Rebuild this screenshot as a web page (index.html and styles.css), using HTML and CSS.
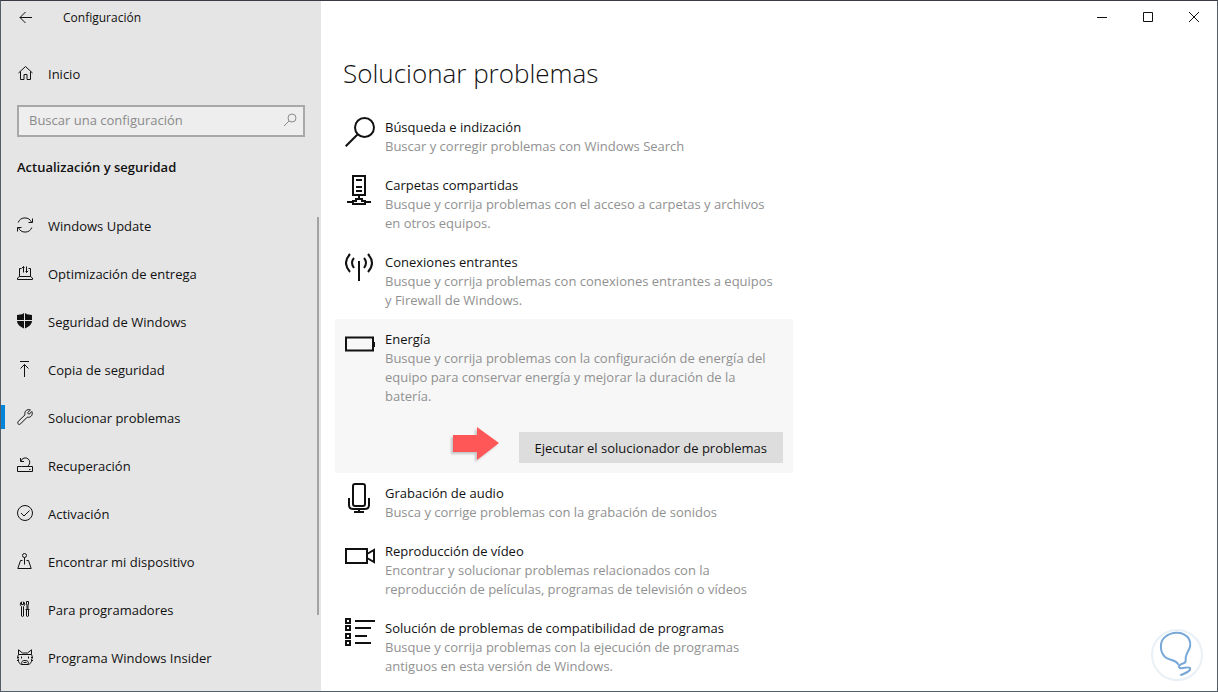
FILE: index.html
```html
<!DOCTYPE html>
<html lang="es">
<head>
<meta charset="utf-8">
<meta name="viewport" content="width=device-width, initial-scale=1">
<title>Configuración</title>
<link rel="stylesheet" href="styles.css">
</head>
<body>
<div class="window">
  <aside class="sidebar">
    <header class="titlebar">
      <button class="back" aria-label="Atrás"><svg width="14" height="14" viewBox="0 0 14 14"><path d="M6.500 1 1 6.500l5.500 5.500M1 6.500h12"/></svg></button>
      <span class="app-name">Configuración</span>
    </header>
    <a class="nav-link home" href="#"><svg class="nav-icon" viewBox="0 0 16 16"><path d="M1.500 8 8.500 1.500 15.500 8M3.500 6.500v8h3.500v-5h3v5h3.500v-8"/></svg>Inicio</a>
    <form class="search">
      <input class="search-input" type="text" placeholder="Buscar una configuración" aria-label="Buscar una configuración">
      <svg class="search-icon" viewBox="0 0 14 14"><circle cx="9" cy="5" r="4"/><path d="M6 8 1 13"/></svg>
    </form>
    <h2 class="section">Actualización y seguridad</h2>
    <nav class="nav">
      <a class="nav-link" href="#"><svg class="nav-icon" viewBox="0 0 16 16"><path d="M1.200 5.500A7.200 7.200 0 0 1 14.600 5.500M15.500 1.500v4H11.500M14.800 10.500A7.200 7.200 0 0 1 1.400 10.500M.5 14.500v-4H4.500"/></svg>Windows Update</a>
      <a class="nav-link" href="#"><svg class="nav-icon" viewBox="0 0 16 16"><path d="M4.500 3.500h-2v8M11.500 3.500h2v8M2.500 11.500h11l2 1.500v1.500H.5V13zM6.500 7.500v-6M4.800 3.200 6.500 1.500l1 1M9.500 1.500v6M8.500 6.500l1 1 1.700-1.700"/></svg>Optimización de entrega</a>
      <a class="nav-link" href="#"><svg class="nav-icon" viewBox="0 0 16 16"><path class="solid" d="M7 0 5 1.200 0 2v5h7zM8 0v7h7V2L10 1.200zM0 8h7v7.500C3 13.500.5 12 0 8zM8 8h7c-.5 4-3 5.500-7 7.500z"/></svg>Seguridad de Windows</a>
      <a class="nav-link" href="#"><svg class="nav-icon" viewBox="0 0 16 16"><path d="M3 .5h9M7.500 16V3.500M3.500 7.500l4-4 4 4"/></svg>Copia de seguridad</a>
      <a class="nav-link current" href="#" aria-current="page"><svg class="nav-icon" viewBox="0 0 16 16"><path d="M14.800 2.500 12 5.300 10.500 3.800 13.400 1C10.500-.3 7 2 8 5.800L1.200 12.500C-.3 14.500 2 16.500 3.600 14.800L10.200 8.200C14 9 16.300 5.500 14.800 2.500z"/></svg>Solucionar problemas</a>
      <a class="nav-link" href="#"><svg class="nav-icon" viewBox="0 0 16 16"><path d="M4.500 9.500h-4v5h15v-5H11M12 12.500h1.500M4.500 9.500H11M10.500 9.300A4.500 4.500 0 1 0 4 4M3.500 1v3.500H7"/></svg>Recuperación</a>
      <a class="nav-link" href="#"><svg class="nav-icon" viewBox="0 0 16 16"><circle cx="8" cy="8" r="7.500"/><path d="M4 8l3 3 5.500-5.500"/></svg>Activación</a>
      <a class="nav-link" href="#"><svg class="nav-icon" viewBox="0 0 16 16"><circle cx="7.500" cy="2.500" r="2"/><path d="M7.500 4.500v7M5.500 7.500h-2L.8 15.500h13.400l-2.700-8h-2"/></svg>Encontrar mi dispositivo</a>
      <a class="nav-link" href="#"><svg class="nav-icon" viewBox="0 0 16 16"><path d="M4.500.8v2.700h2V.8C8.300 2 8 4.500 6.500 5.500V15c-.5.700-1.500.7-2 0V5.500C3 4.500 2.800 2 4.500.8zM9.500.5h2V3l-.5 1v4.500h-1V4l-.5-1zM8.500 8.500h4M9.500 8.500V15c.5.700 1.500.7 2 0V8.500"/></svg>Para programadores</a>
      <a class="nav-link" href="#"><svg class="nav-icon" viewBox="0 0 16 16"><path d="M1.500 5.500V.8L5.500 4h5l4-3.200v4.700zC.5 7.500.5 9 1.500 11c-.3 2 1 4.200 3.500 4.500h6c2.500-.3 3.800-2.500 3.500-4.500 1-2 1-3.500 0-5.500M0 8.500h2M14 8.500h2M0 11.500h2M14 11.500h2M4.500 7.500v2M11.500 7.500v2M5 15c-1-2 0-3.500 3-3.500s4 1.500 3 3.500M6.500 13.500h3"/></svg>Programa Windows Insider</a>
    </nav>
    <span class="scroll-thumb"></span>
  </aside>

  <main class="content">
    <div class="controls">
      <button class="control" aria-label="Minimizar"><svg width="11" height="11" viewBox="0 0 11 11"><path d="M0 5.500h10"/></svg></button>
      <button class="control" aria-label="Maximizar"><svg width="11" height="11" viewBox="0 0 11 11"><path d="M.5.5h9v9H.5z"/></svg></button>
      <button class="control" aria-label="Cerrar"><svg width="11" height="11" viewBox="0 0 11 11"><path d="m0 0 10 10M10 0 0 10"/></svg></button>
    </div>
    <h1 class="title">Solucionar problemas</h1>
    <div class="list">
      <section class="item">
        <svg class="item-icon" viewBox="0 0 30 30"><circle cx="19.500" cy="10.500" r="9.500"/><path d="M12.500 17.500.7 29.300"/></svg>
        <div class="item-text"><h3 class="name">Búsqueda e indización</h3><p class="desc">Buscar y corregir problemas con Windows Search</p></div>
      </section>
      <section class="item">
        <svg class="item-icon" viewBox="0 0 30 30"><path d="M8 1h12v19H8zM11 5h6M11 12h6M11 16h6M14 20v4M2 27h6M20 27h6M11 24h6v2h3v3H8v-3h3z"/></svg>
        <div class="item-text"><h3 class="name">Carpetas compartidas</h3><p class="desc">Busque y corrija problemas con el acceso a carpetas y archivos en otros equipos.</p></div>
      </section>
      <section class="item">
        <svg class="item-icon" viewBox="0 0 30 30"><path d="M14 9v20M9 6Q5 10.500 9 16M19 6Q23 10.500 19 16M5 2Q-3 11 5 20M23 2Q31 11 23 20"/></svg>
        <div class="item-text"><h3 class="name">Conexiones entrantes</h3><p class="desc">Busque y corrija problemas con conexiones entrantes a equipos y Firewall de Windows.</p></div>
      </section>
      <section class="item open">
        <svg class="item-icon" viewBox="0 0 30 30"><path d="M1 8.500h27v13H1zM29 13v5"/></svg>
        <div class="item-text"><h3 class="name">Energía</h3><p class="desc">Busque y corrija problemas con la configuración de energía del equipo para conservar energía y mejorar la duración de la batería.</p></div>
        <div class="actions">
          <svg class="arrow" viewBox="0 0 50 36"><path class="arrow-body" d="M4 10h24V2l22 16-22 17v-8H4z"/></svg>
          <button class="run">Ejecutar el solucionador de problemas</button>
        </div>
      </section>
      <section class="item">
        <svg class="item-icon" viewBox="0 0 30 30"><rect x="8" y="1" width="12" height="22" rx="2"/><path d="M4 15v7q0 4 4 4h12q4 0 4-4v-7M14 26v4M9 29h10"/></svg>
        <div class="item-text"><h3 class="name">Grabación de audio</h3><p class="desc">Busca y corrige problemas con la grabación de sonidos</p></div>
      </section>
      <section class="item">
        <svg class="item-icon" viewBox="0 0 30 30"><path d="M1 8h21v14H1zM22 13l7-4v12l-7-4"/></svg>
        <div class="item-text"><h3 class="name">Reproducción de vídeo</h3><p class="desc">Encontrar y solucionar problemas relacionados con la reproducción de películas, programas de televisión o vídeos</p></div>
      </section>
      <section class="item">
        <svg class="item-icon" viewBox="0 0 30 30"><path d="M1 1h4v4H1zM1 8h4v4H1zM1 16h4v4H1zM1 23h4v4H1zM10 3h20M10 10h16M10 18h12M10 25h16"/></svg>
        <div class="item-text"><h3 class="name">Solución de problemas de compatibilidad de programas</h3><p class="desc">Busque y corrija problemas con la ejecución de programas antiguos en esta versión de Windows.</p></div>
      </section>
    </div>
    <svg class="badge" viewBox="0 0 54 54"><circle class="badge-disc" cx="27" cy="27" r="25"/><path class="badge-bulb" d="M28 36C25 31 20 33 15 29 10 24 9 14 15 9c7-6 19-6 24 2 4 8-2 12-3 17-1 4 1 6-2 7-4 1-7 4-4 5 3 1 8-2 10 0 1 3-4 5-9 7"/></svg>
  </main>
</div>
</body>
</html>
```
FILE: styles.css
```css
* { box-sizing: border-box; }

body {
  margin: 0;
  font: 13px/20px "Open Sans", "Noto Sans", sans-serif;
  color: #111;
  background: #fff;
}

h1, h2, h3, p { margin: 0; }
button, input { font: inherit; color: inherit; border: 0; border-radius: 0; }
svg { fill: none; stroke: currentColor; flex: none; }

.window {
  display: flex;
  min-height: 100vh;
  border: 1px solid #555e68;
  border-top-color: #3a3a44;
}

.sidebar {
  position: relative;
  flex: none;
  width: 320px;
  background: #e5e5e5;
}

.titlebar {
  display: flex;
  align-items: center;
  gap: 20px;
  height: 34px;
  padding-left: 8px;
}

.back {
  display: grid;
  place-items: center;
  width: 34px;
  height: 32px;
  padding: 0;
  background: none;
}

.app-name { font-size: 12px; }

.nav-link {
  display: flex;
  align-items: center;
  gap: 15px;
  height: 48px;
  padding-left: 16px;
  color: inherit;
  text-decoration: none;
}

.home { margin-top: 15px; }

.nav-icon { width: 16px; height: 16px; margin-bottom: 2px; }
.solid { fill: currentColor; stroke: none; }

.current {
  background: linear-gradient(#0085d8, #0085d8) 0 11px / 4px 24px no-repeat;
}

.search {
  display: flex;
  align-items: center;
  margin: 7px 16px 0;
  height: 32px;
  padding: 0 6px 2px 10px;
  border: 2px solid #a8a8a8;
  background: #eee;
}

.search-input {
  flex: 1;
  min-width: 0;
  padding: 0;
  outline: 0;
  background: none;
}

.search-input::placeholder { color: #8a8a8a; opacity: 1; }
.search-icon { width: 14px; height: 14px; color: #8a8a8a; }

.section {
  margin: 20px 16px 25px;
  font-size: 13px;
  font-weight: 600;
}

.scroll-thumb {
  position: absolute;
  top: 216px;
  right: 2px;
  width: 2px;
  height: 398px;
  background: #a3a3a3;
}

.content { flex: 1; min-width: 0; padding-left: 14px; }

.controls { display: flex; justify-content: flex-end; height: 32px; }

.control {
  display: grid;
  place-items: center;
  width: 46px;
  padding: 0;
  background: none;
}

.title {
  margin: 22px 0 16px 8px;
  font-size: 26px;
  line-height: 36px;
  font-weight: 300;
}

.list { max-width: 458px; }

.item {
  display: grid;
  grid-template-columns: 30px 1fr;
  column-gap: 10px;
  padding: 10px 10px 9px;
}

.item-icon { width: 30px; height: 30px; stroke-width: 2; }
.item-text { padding-right: 6px; }
.name { font-size: 13px; font-weight: 400; }
.desc { line-height: 19px; color: #919191; }

.open { padding-bottom: 10px; background: #f7f7f7; }

.actions {
  grid-column: 1 / -1;
  display: flex;
  justify-content: flex-end;
  align-items: flex-end;
  gap: 20px;
  height: 31px;
  margin-top: 26px;
}

.arrow {
  width: 50px;
  height: 36px;
  margin-bottom: 2px;
  filter: drop-shadow(-2px 2px 1px #0003);
}

.arrow-body { fill: #ff5757; stroke: none; }

.run {
  height: 31px;
  padding: 0 16px;
  background: #ddd;
}

.badge {
  position: absolute;
  right: 14px;
  bottom: 10px;
  width: 54px;
  height: 54px;
}

.badge-disc { fill: #fff; stroke: #e9f0f6; stroke-width: 2; }
.badge-bulb { stroke: #78a8d8; stroke-width: 2; stroke-linecap: round; }
```
